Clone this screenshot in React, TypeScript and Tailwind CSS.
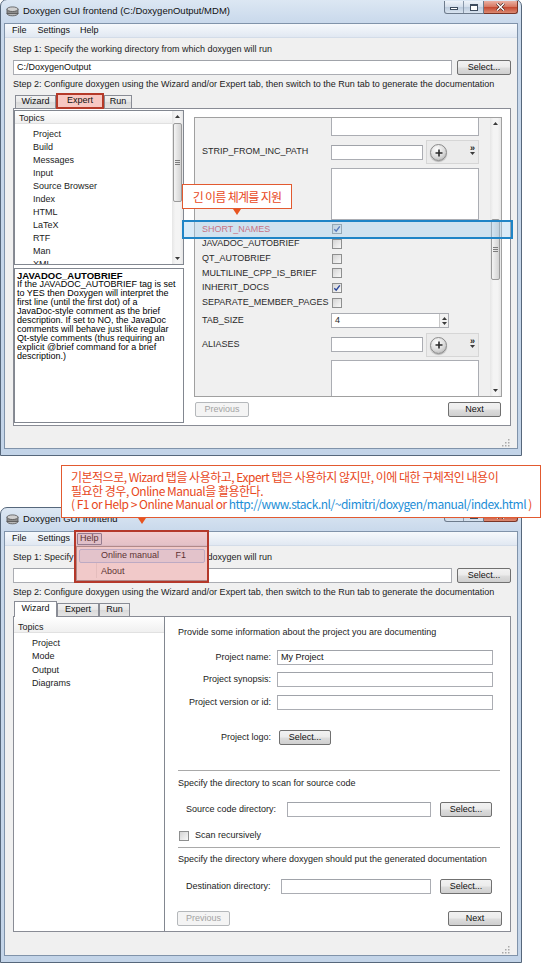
import React from "react";

const UI = "font-['Liberation_Sans',Arial,sans-serif]";
const KR = "font-['Noto_Sans_CJK_KR','Noto_Sans',sans-serif]";

function DoxIcon() {
  return (
    <svg width="13" height="11" viewBox="0 0 13 11">
      <ellipse cx="6.5" cy="7.5" rx="5.5" ry="2.3" fill="#b9b9b9" stroke="#505050" strokeWidth="0.8" />
      <rect x="1" y="3.2" width="11" height="4.3" fill="#8d8d8d" stroke="#505050" strokeWidth="0.8" />
      <ellipse cx="6.5" cy="3.2" rx="5.5" ry="2.3" fill="#d0d0d0" stroke="#505050" strokeWidth="0.8" />
    </svg>
  );
}

function Controls() {
  return (
    <div className="mt-[1px] flex h-[13px]">
      <div className="flex h-full w-[40px] overflow-hidden rounded-bl-[3px] border border-t-0 border-[#6d7b8c] bg-[linear-gradient(to_bottom,#eef3f9,#d3deeb_50%,#bccbdd_51%,#d9e4f0)]">
        <div className="flex w-[20px] items-end justify-center border-r border-[#8a98aa] pb-[3px]">
          <div className="h-[3px] w-[8px] border border-[#3f4d5f] bg-white" />
        </div>
        <div className="flex w-[20px] items-center justify-center">
          <div className="h-[7px] w-[8px] border border-t-2 border-[#3f4d5f] bg-white" />
        </div>
      </div>
      <div className="flex h-full w-[34px] items-center justify-center rounded-br-[3px] border border-l-0 border-t-0 border-[#7a3527] bg-[linear-gradient(to_bottom,#eab0a2,#d6755f_50%,#c4472f_51%,#dc8a72)]">
        <svg width="9" height="8" viewBox="0 0 9 8">
          <path d="M1 0.5 L8 7.5 M8 0.5 L1 7.5" stroke="#3a1a14" strokeWidth="2.6" />
          <path d="M1 0.5 L8 7.5 M8 0.5 L1 7.5" stroke="#ffffff" strokeWidth="1.5" />
        </svg>
      </div>
    </div>
  );
}

function MenuBar({ helpActive }: { helpActive?: boolean }) {
  return (
    <div className="flex h-[14px] items-center border-b border-[#d3dce8] bg-[linear-gradient(to_bottom,#f6f9fc,#e1e8f2)] pl-[7px] text-[9px] text-[#111]">
      <span>File</span>
      <span className="ml-[11px]">Settings</span>
      {helpActive ? (
        <span className="ml-[7px] flex h-[12px] items-center rounded-[1px] border border-[#6f84a0] bg-[#dce6f3] px-[2px]">Help</span>
      ) : (
        <span className="ml-[10px]">Help</span>
      )}
    </div>
  );
}

function Frame({
  title,
  hClass,
  helpActive,
  children,
}: {
  title: string;
  hClass: string;
  helpActive?: boolean;
  children: React.ReactNode;
}) {
  return (
    <div
      className={`flex w-[522px] flex-col rounded-t-[7px] border border-[#56677b] bg-[linear-gradient(to_bottom,#dce7f3,#c8d8eb_24px,#c3d4e8)] ${hClass}`}
    >
      <div className="flex h-[23px] items-start">
        <div className="ml-[5px] mt-[5px] flex items-center gap-[4px]">
          <DoxIcon />
          <span className="text-[9.5px] leading-[12px] text-[#111]">{title}</span>
        </div>
        <div className="ml-auto mr-[3px]">
          <Controls />
        </div>
      </div>
      <div className="mx-[3px] mb-[6px] flex flex-1 flex-col border border-[#8093aa] bg-[#f0f0f0]">
        <MenuBar helpActive={helpActive} />
        {children}
      </div>
    </div>
  );
}

function Btn({
  w,
  children,
  disabled,
  cls = "",
}: {
  w: string;
  children: React.ReactNode;
  disabled?: boolean;
  cls?: string;
}) {
  return disabled ? (
    <div
      className={`flex h-[15px] items-center justify-center rounded-[2px] border border-[#b5b8bb] bg-[#f4f4f4] text-[9px] text-[#a3a3a3] ${w} ${cls}`}
    >
      {children}
    </div>
  ) : (
    <div
      className={`flex h-[15px] items-center justify-center rounded-[2px] border border-[#707070] bg-[linear-gradient(to_bottom,#f2f2f2,#ebebeb_48%,#dddddd_52%,#cfcfcf)] text-[9px] text-[#111] ${w} ${cls}`}
    >
      {children}
    </div>
  );
}

function Input({ w, children, cls = "" }: { w: string; children?: React.ReactNode; cls?: string }) {
  return (
    <div
      className={`flex h-[15px] items-center border border-[#abadb3] border-t-[#a0a3a9] bg-white pl-[3px] text-[9px] text-[#111] ${w} ${cls}`}
    >
      {children}
    </div>
  );
}

function Check({ checked }: { checked?: boolean }) {
  return (
    <div className="flex h-[10px] w-[10px] items-center justify-center border border-[#8e8f8f] bg-[linear-gradient(135deg,#d4d4d4,#f8f8f8)]">
      {checked && (
        <svg width="8" height="8" viewBox="0 0 8 8">
          <path d="M1.3 4.2 L3.2 6.2 L6.8 1.4" stroke="#27449a" strokeWidth="1.4" fill="none" />
        </svg>
      )}
    </div>
  );
}

function Arrow({ up }: { up?: boolean }) {
  return (
    <svg width="5" height="3" viewBox="0 0 5 3">
      {up ? <path d="M0 3 L2.5 0 L5 3 Z" fill="#3a3a3a" /> : <path d="M0 0 L2.5 3 L5 0 Z" fill="#3a3a3a" />}
    </svg>
  );
}

function VScroll({ w, thumbTop, thumbH }: { w: string; thumbTop: string; thumbH: string }) {
  return (
    <div className={`flex flex-col bg-[linear-gradient(to_right,#e6e6e6,#f4f4f4_30%,#f4f4f4_70%,#e6e6e6)] ${w}`}>
      <div className="flex h-[11px] items-center justify-center">
        <Arrow up />
      </div>
      <div className="flex-1">
        <div
          className={`mx-auto flex w-[calc(100%-2px)] items-center justify-center rounded-[2px] border border-[#9a9a9a] bg-[linear-gradient(to_right,#f4f4f4,#e3e3e3_50%,#d3d3d3)] ${thumbTop} ${thumbH}`}
        >
          <div className="flex flex-col gap-[1px]">
            <div className="h-[1px] w-[5px] bg-[#7c7c7c]" />
            <div className="h-[1px] w-[5px] bg-[#7c7c7c]" />
            <div className="h-[1px] w-[5px] bg-[#7c7c7c]" />
          </div>
        </div>
      </div>
      <div className="flex h-[11px] items-center justify-center">
        <Arrow />
      </div>
    </div>
  );
}

function PlusBox() {
  return (
    <div className="ml-[3px] flex h-[24px] w-[53px] border border-[#d6d6d6] bg-[#ebebeb]">
      <div className="ml-[3px] mt-[3px] flex h-[17px] w-[17px] items-center justify-center rounded-full border border-[#8a8a8a] bg-[radial-gradient(circle_at_40%_30%,#ffffff,#dadada_55%,#a9a9a9)] shadow-[0_1px_1px_rgba(0,0,0,0.25)]">
        <svg width="8" height="8" viewBox="0 0 8 8">
          <path d="M4 0.5 V7.5 M0.5 4 H7.5" stroke="#2b2b2b" strokeWidth="1.6" />
        </svg>
      </div>
      <div className="ml-auto mr-[3px] flex flex-col items-center pt-[3px]">
        <span className="text-[9px] font-bold leading-[8px] text-[#222]">»</span>
        <Arrow />
      </div>
    </div>
  );
}

function Tab({
  label,
  w,
  active,
  highlight,
}: {
  label: string;
  w: string;
  active?: boolean;
  highlight?: boolean;
}) {
  if (highlight)
    return (
      <div className={`flex h-[16px] items-center justify-center border-2 border-[#b53a29] bg-[#f8c8c2] text-[9px] text-[#111] ${w}`}>
        {label}
      </div>
    );
  if (active)
    return (
      <div className={`flex h-[16px] items-center justify-center border border-b-0 border-[#898c95] bg-white pb-[1px] text-[9px] text-[#111] ${w}`}>
        {label}
      </div>
    );
  return (
    <div className={`flex h-[14px] items-center justify-center border border-[#898c95] bg-[linear-gradient(to_bottom,#f3f3f3,#e6e6e6_50%,#dadada_51%,#e4e4e4)] text-[9px] text-[#111] ${w}`}>
      {label}
    </div>
  );
}

function Grip() {
  return (
    <div className="mt-auto flex justify-end pb-[1px] pr-[1px]">
      <svg width="8" height="8" viewBox="0 0 8 8">
        {[
          [6, 0],
          [6, 3],
          [3, 3],
          [6, 6],
          [3, 6],
          [0, 6],
        ].map(([x, y], i) => (
          <rect key={i} x={x} y={y} width="1.5" height="1.5" fill="#a9a9a9" />
        ))}
      </svg>
    </div>
  );
}

const expertTopics = [
  "Project",
  "Build",
  "Messages",
  "Input",
  "Source Browser",
  "Index",
  "HTML",
  "LaTeX",
  "RTF",
  "Man",
  "XML",
];

const descLines = [
  "If the JAVADOC_AUTOBRIEF tag is set",
  "to YES then Doxygen will interpret the",
  "first line (until the first dot) of a",
  "JavaDoc-style comment as the brief",
  "description. If set to NO, the JavaDoc",
  "comments will behave just like regular",
  "Qt-style comments (thus requiring an",
  "explicit @brief command for a brief",
  "description.)",
];

const boolRows: { label: string; checked: boolean; red?: boolean }[] = [
  { label: "SHORT_NAMES", checked: true, red: true },
  { label: "JAVADOC_AUTOBRIEF", checked: false },
  { label: "QT_AUTOBRIEF", checked: false },
  { label: "MULTILINE_CPP_IS_BRIEF", checked: false },
  { label: "INHERIT_DOCS", checked: true },
  { label: "SEPARATE_MEMBER_PAGES", checked: false },
];

function Window1() {
  return (
    <Frame title="Doxygen GUI frontend (C:/DoxygenOutput/MDM)" hClass="h-[457px]">
      <div className="flex flex-1 flex-col pl-[8px] pr-[6px] pt-[4px] text-[9px] text-[#1b1b1b]">
        <div className="h-[14px] leading-[14px]">Step 1: Specify the working directory from which doxygen will run</div>
        <div className="mt-[4px] flex h-[15px] gap-[5px]">
          <Input w="flex-1">C:/DoxygenOutput</Input>
          <Btn w="w-[54px]">Select...</Btn>
        </div>
        <div className="mt-[2px] h-[14px] whitespace-nowrap leading-[14px]">
          Step 2: Configure doxygen using the Wizard and/or Expert tab, then switch to the Run tab to generate the documentation
        </div>
        <div className="relative z-10 -mb-[1px] ml-[2px] mt-[2px] flex h-[16px] items-end">
          <Tab label="Wizard" w="w-[41px]" />
          <Tab label="Expert" w="w-[48px]" active highlight />
          <Tab label="Run" w="w-[28px]" />
        </div>
        <div className="flex h-[318px] border border-[#898c95] bg-white">
          <div className="flex w-[170px] flex-col pt-[1px]">
            <div className="flex h-[155px] overflow-hidden border border-[#828790] bg-white">
              <div className="flex-1 overflow-hidden">
                <div className="h-[13px] border-b border-[#e1e1e1] bg-[linear-gradient(to_bottom,#ffffff,#f0f0f0)] pl-[4px] leading-[14px]">
                  Topics
                </div>
                <div className="pl-[18px] pt-[4px]">
                  {expertTopics.map((t) => (
                    <div key={t} className="h-[13px] leading-[13px]">
                      {t}
                    </div>
                  ))}
                </div>
              </div>
              <VScroll w="w-[11px]" thumbTop="mt-[1px]" thumbH="h-[79px]" />
            </div>
            <div className="mt-[3px] h-[155px] overflow-hidden border border-[#828790] bg-white pl-[2px] pt-[2px]">
              <div className="text-[9.5px] font-bold leading-[9px] text-[#000]">JAVADOC_AUTOBRIEF</div>
              {descLines.map((l) => (
                <div key={l} className="whitespace-nowrap leading-[9px] text-[#000]">
                  {l}
                </div>
              ))}
            </div>
          </div>
          <div className="flex flex-1 flex-col pl-[10px] pr-[8px] pt-[8px]">
            <div className="flex h-[280px] border border-[#a0a0a0] bg-[#f0f0f0]">
              <div className="flex flex-1 flex-col overflow-hidden pl-[7px] text-[#2a2a2a]">
                <div className="ml-[129px] h-[18px] w-[148px] shrink-0 border border-t-0 border-[#abadb3] bg-white" />
                <div className="mt-[4px] flex h-[24px] shrink-0 items-center">
                  <div className="w-[129px]">STRIP_FROM_INC_PATH</div>
                  <Input w="w-[92px]" />
                  <PlusBox />
                </div>
                <div className="ml-[129px] mt-[4px] h-[52px] w-[148px] shrink-0 border border-[#abadb3] bg-white" />
                <div className="mt-[2px] shrink-0">
                  {boolRows.map((r) => (
                    <div key={r.label} className="flex h-[14.7px] items-center">
                      <div className={`w-[130px] ${r.red ? "text-[#e2343a]" : ""}`}>{r.label}</div>
                      <Check checked={r.checked} />
                    </div>
                  ))}
                </div>
                <div className="mt-[3px] flex h-[15px] shrink-0 items-center">
                  <div className="w-[129px]">TAB_SIZE</div>
                  <div className="flex h-[15px] w-[118px] border border-[#abadb3] bg-white">
                    <div className="flex-1 pl-[3px] leading-[13px]">4</div>
                    <div className="flex w-[9px] flex-col items-center justify-center gap-[2px] border-l border-[#c9c9c9] bg-[#f2f2f2]">
                      <Arrow up />
                      <Arrow />
                    </div>
                  </div>
                </div>
                <div className="mt-[4px] flex h-[25px] shrink-0 items-center">
                  <div className="w-[129px]">ALIASES</div>
                  <Input w="w-[92px]" />
                  <PlusBox />
                </div>
                <div className="ml-[129px] mt-[3px] h-[50px] w-[148px] shrink-0 border border-[#abadb3] bg-white" />
              </div>
              <VScroll w="w-[11px]" thumbTop="mt-[90px]" thumbH="h-[61px]" />
            </div>
            <div className="mt-[5px] flex justify-between px-[1px]">
              <Btn w="w-[54px]" disabled>
                Previous
              </Btn>
              <Btn w="w-[53px]">Next</Btn>
            </div>
          </div>
        </div>
        <Grip />
      </div>
    </Frame>
  );
}

function Window2() {
  return (
    <Frame title="Doxygen GUI frontend" hClass="h-[456px]" helpActive>
      <div className="flex flex-1 flex-col pl-[8px] pr-[6px] pt-[4px] text-[9px] text-[#1b1b1b]">
        <div className="h-[14px] leading-[14px]">Step 1: Specify the working directory from which doxygen will run</div>
        <div className="mt-[4px] flex h-[15px] gap-[5px]">
          <Input w="flex-1" />
          <Btn w="w-[54px]">Select...</Btn>
        </div>
        <div className="mt-[2px] h-[14px] whitespace-nowrap leading-[14px]">
          Step 2: Configure doxygen using the Wizard and/or Expert tab, then switch to the Run tab to generate the documentation
        </div>
        <div className="relative z-10 -mb-[1px] ml-[1px] mt-[2px] flex h-[16px] items-end">
          <Tab label="Wizard" w="w-[43px]" active />
          <Tab label="Expert" w="w-[42px]" />
          <Tab label="Run" w="w-[31px]" />
        </div>
        <div className="flex h-[316px] border border-[#898c95] bg-white">
          <div className="w-[151px] border-r border-[#828790]">
            <div className="h-[16px] border-b border-[#e1e1e1] bg-[linear-gradient(to_bottom,#ffffff,#f0f0f0)] pl-[4px] leading-[20px]">
              Topics
            </div>
            <div className="pl-[18px] pt-[4px]">
              {["Project", "Mode", "Output", "Diagrams"].map((t) => (
                <div key={t} className="h-[13.3px] leading-[13.3px]">
                  {t}
                </div>
              ))}
            </div>
          </div>
          <div className="flex flex-1 flex-col pt-[9px]">
            <div className="h-[12px] pl-[13px] leading-[12px]">Provide some information about the project you are documenting</div>
            <div className="mt-[12px] flex h-[15px] items-center">
              <div className="w-[106px] text-right">Project name:</div>
              <Input w="w-[216px]" cls="ml-[6px]">
                My Project
              </Input>
            </div>
            <div className="mt-[7px] flex h-[15px] items-center">
              <div className="w-[106px] text-right">Project synopsis:</div>
              <Input w="w-[216px]" cls="ml-[6px]" />
            </div>
            <div className="mt-[8px] flex h-[15px] items-center">
              <div className="w-[106px] text-right">Project version or id:</div>
              <Input w="w-[216px]" cls="ml-[6px]" />
            </div>
            <div className="mt-[20px] flex h-[15px] items-center">
              <div className="w-[106px] text-right">Project logo:</div>
              <Btn w="w-[52px]" cls="ml-[8px]">
                Select...
              </Btn>
            </div>
            <div className="ml-[13px] mt-[25px] h-[2px] w-[322px] border-b border-t border-b-white border-t-[#a9a9a9]" />
            <div className="mt-[5px] h-[12px] pl-[13px] leading-[12px]">Specify the directory to scan for source code</div>
            <div className="mt-[13px] flex h-[15px] items-center">
              <div className="ml-[21px] w-[101px]">Source code directory:</div>
              <Input w="w-[144px]" />
              <Btn w="w-[52px]" cls="ml-[9px]">
                Select...
              </Btn>
            </div>
            <div className="ml-[14px] mt-[14px] flex h-[10px] items-center">
              <Check />
              <span className="ml-[6px]">Scan recursively</span>
            </div>
            <div className="ml-[13px] mt-[6px] h-[2px] w-[322px] border-b border-t border-b-white border-t-[#a9a9a9]" />
            <div className="mt-[4px] h-[12px] whitespace-nowrap pl-[13px] leading-[12px]">
              Specify the directory where doxygen should put the generated documentation
            </div>
            <div className="mt-[14px] flex h-[15px] items-center">
              <div className="ml-[21px] w-[95px]">Destination directory:</div>
              <Input w="w-[150px]" />
              <Btn w="w-[52px]" cls="ml-[9px]">
                Select...
              </Btn>
            </div>
            <div className="mt-[17px] flex pl-[12px] pr-[8px]">
              <Btn w="w-[53px]" disabled>
                Previous
              </Btn>
              <Btn w="w-[54px]" cls="ml-auto">
                Next
              </Btn>
            </div>
          </div>
        </div>
        <Grip />
      </div>
    </Frame>
  );
}

export default function App() {
  return (
    <div className={`relative h-[963px] w-[543px] overflow-hidden bg-white ${UI}`}>
      <div className="-mt-[1px]">
        <Window1 />
      </div>
      <div className="mt-[51px]">
        <Window2 />
      </div>

      {/* Callout 1 */}
      <div
        className={`absolute left-[182px] top-[184px] flex h-[25px] w-[110px] items-center justify-center border-[1.5px] border-[#e25a30] bg-white text-[12px] tracking-[-0.7px] text-[#e8481c] ${KR}`}
      >
        긴 이름 체계를 지원
      </div>
      <div className="absolute left-[233px] top-[209px] h-0 w-0 border-x-[4px] border-t-[6px] border-x-transparent border-t-[#e8541f]" />

      {/* Highlight SHORT_NAMES */}
      <div className="absolute left-[182px] top-[220px] h-[19px] w-[331px] border-2 border-[#1f84c6] bg-[rgba(160,205,238,0.4)]" />

      {/* Callout 2 */}
      <div
        className={`absolute left-[61px] top-[465px] h-[53px] w-[480px] border-[1.5px] border-[#e25a30] bg-white pl-[9px] pt-[4px] text-[12px] leading-[13.5px] tracking-[-0.5px] text-[#e8481c] ${KR}`}
      >
        <div className="whitespace-nowrap">기본적으로, Wizard 탭을 사용하고, Expert 탭은 사용하지 않지만, 이에 대한 구체적인 내용이</div>
        <div className="whitespace-nowrap">필요한 경우, Online Manual을 활용한다.</div>
        <div className="whitespace-nowrap">
          ( F1 or Help &gt; Online Manual or{" "}
          <span className="text-[#1d8ed6]">http://www.stack.nl/~dimitri/doxygen/manual/index.html</span> )
        </div>
      </div>
      <div className="absolute left-[138px] top-[518px] h-0 w-0 border-x-[4px] border-t-[6px] border-x-transparent border-t-[#e8541f]" />

      {/* Help menu dropdown */}
      <div className="absolute left-[76px] top-[546px] flex h-[35px] w-[132px] flex-col border border-[#979797] bg-[#f5f5f5] py-[2px] text-[9px] text-[#111]">
        <div className="absolute bottom-[2px] left-[19px] top-[2px] w-[1px] bg-[#e2e3e3]" />
        <div className="relative mx-[2px] flex h-[14px] items-center rounded-[2px] border border-[#a8c8ec] bg-[#e1ecf8] pl-[21px] pr-[18px]">
          <span>Online manual</span>
          <span className="ml-auto">F1</span>
        </div>
        <div className="relative mx-[2px] mt-[2px] flex h-[14px] items-center pl-[22px]">About</div>
      </div>
      <div className="absolute left-[74px] top-[530px] h-[53px] w-[135px] border-2 border-[#b4382a] bg-[rgba(232,110,110,0.32)]" />
    </div>
  );
}
